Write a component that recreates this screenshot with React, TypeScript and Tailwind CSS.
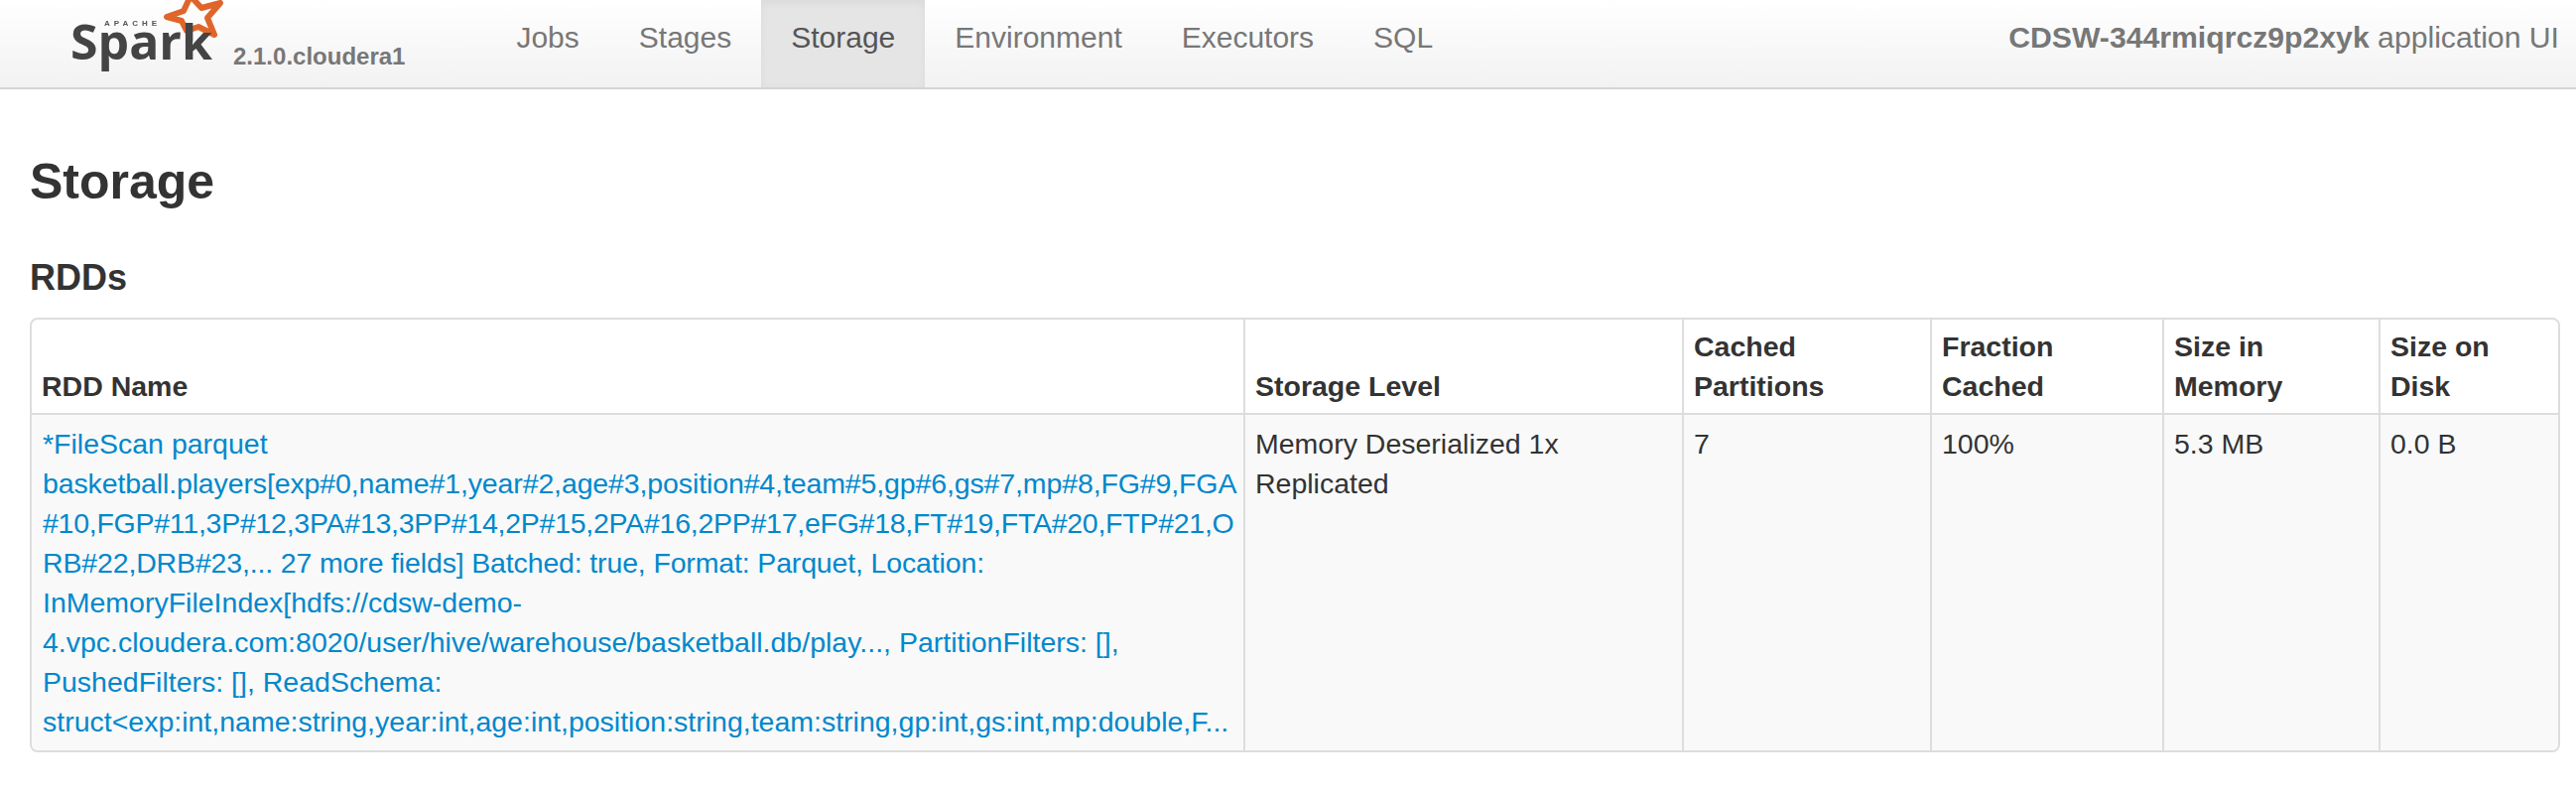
const F = "font-['Liberation_Sans',Arial,sans-serif]";

function Logo() {
  return (
    <svg width="170" height="88" viewBox="0 0 170 88" className="shrink-0 blur-[0.6px]">
      <path
        d="M122 -4 L133 8 L152 3 L139 18 L146 35 L130 27 L118 31 L113 21 L98 17 L115 11 Z"
        fill="none"
        stroke="#e0652b"
        strokeWidth="6"
        strokeLinejoin="round"
      />
      <text x="35" y="26" fontSize="8" fontWeight="700" letterSpacing="4" fill="#555" fontFamily="Liberation Sans">APACHE</text>
      <text x="1" y="60" fontSize="48" fontWeight="700" fill="#444" fontFamily="Open Sans" textLength="143" lengthAdjust="spacingAndGlyphs">Spark</text>
    </svg>
  );
}

const items = ["Jobs", "Stages", "Storage", "Environment", "Executors", "SQL"];
const headers = ["RDD Name", "Storage Level", "Cached Partitions", "Fraction Cached", "Size in Memory", "Size on Disk"];
const lines: [string, string][] = [
  ["*FileScan parquet", ""],
  ["basketball.players[exp#0,name#1,year#2,age#3,position#4,team#5,gp#6,gs#7,mp#8,FG#9,FGA", "tracking-[-0.12px]"],
  ["#10,FGP#11,3P#12,3PA#13,3PP#14,2P#15,2PA#16,2PP#17,eFG#18,FT#19,FTA#20,FTP#21,O", "tracking-[-0.26px]"],
  ["RB#22,DRB#23,... 27 more fields] Batched: true, Format: Parquet, Location:", "tracking-[-0.15px]"],
  ["InMemoryFileIndex[hdfs://cdsw-demo-", ""],
  ["4.vpc.cloudera.com:8020/user/hive/warehouse/basketball.db/play..., PartitionFilters: [],", ""],
  ["PushedFilters: [], ReadSchema:", ""],
  ["struct<exp:int,name:string,year:int,age:int,position:string,team:string,gp:int,gs:int,mp:double,F...", ""],
];
const widths = ["w-[1221px]", "w-[442px]", "w-[250px]", "w-[234px]", "w-[218px]", "w-[181px]"];

export default function App() {
  return (
    <div className={`${F} min-h-[804px] bg-white text-[#333] text-[28.5px] leading-[40px]`}>
      <div className="flex h-[90px] border-b-2 border-[#d4d4d4] bg-gradient-to-b from-white to-[#f2f2f2] pl-[70px] pr-[17px] text-[#777]">
        <Logo />
        <span className="ml-[-5px] mt-[37px] text-[24px] font-bold">2.1.0.cloudera1</span>
        <nav className="ml-[82px] flex h-[88px]">
          {items.map((t) => (
            <a key={t} className={`px-[30px] pt-[18px] text-[30px] ${t === "Storage" ? "bg-[#e5e5e5] text-[#555] shadow-[inset_0_3px_8px_rgba(0,0,0,0.05)]" : ""}`}>
              {t}
            </a>
          ))}
        </nav>
        <div className="ml-auto pt-[18px] text-[30.2px]">
          <strong>CDSW-344rmiqrcz9p2xyk</strong> application UI
        </div>
      </div>
      <div className="px-[30px]">
        <h3 className="mt-[63px] text-[50px] font-bold leading-[60px]">Storage</h3>
        <h4 className="mt-[47px] text-[36px] font-bold leading-[40px]">RDDs</h4>
        <table className="mt-[20px] w-[2550px] table-fixed border-separate border-spacing-0 rounded-[8px] border-2 border-[#ddd]">
          <thead>
            <tr>
              {headers.map((h, i) => (
                <th key={h} className={`${widths[i]} ${i ? "border-l-2 border-[#ddd]" : ""} px-[10px] py-[7px] text-left align-bottom font-bold`}>
                  {h}
                </th>
              ))}
            </tr>
          </thead>
          <tbody className="bg-[#f9f9f9]">
            <tr>
              <td className="rounded-bl-[8px] border-t-2 border-[#ddd] pl-[11px] pr-[9px] py-[9px] align-top text-[#0088cc] whitespace-nowrap">
                {lines.map(([l, c]) => (
                  <div key={l} className={c}>{l}</div>
                ))}
              </td>
              <td className="border-l-2 border-t-2 border-[#ddd] px-[10px] py-[9px] align-top">Memory Deserialized 1x Replicated</td>
              <td className="border-l-2 border-t-2 border-[#ddd] px-[10px] py-[9px] align-top">7</td>
              <td className="border-l-2 border-t-2 border-[#ddd] px-[10px] py-[9px] align-top">100%</td>
              <td className="border-l-2 border-t-2 border-[#ddd] px-[10px] py-[9px] align-top">5.3 MB</td>
              <td className="rounded-br-[8px] border-l-2 border-t-2 border-[#ddd] px-[10px] py-[9px] align-top">0.0 B</td>
            </tr>
          </tbody>
        </table>
      </div>
    </div>
  );
}
